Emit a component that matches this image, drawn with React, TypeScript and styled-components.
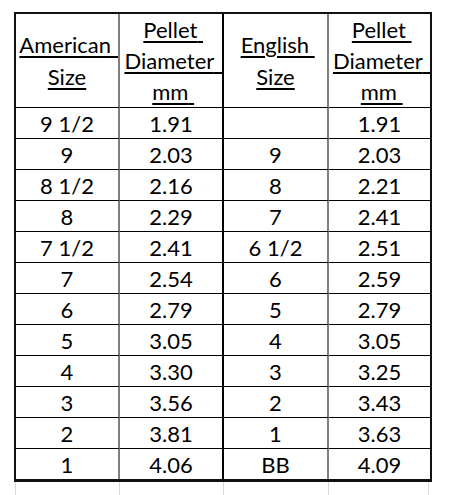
import React from "react";
import styled, { createGlobalStyle } from "styled-components";

const Global = createGlobalStyle`
  html, body { margin: 0; padding: 0; background: #fff; }
  body { font-family: Lato, "Open Sans", "Noto Sans", sans-serif; color: #000; }
`;

type Edge = "gray" | "black" | "none";

const edgeColor = (e: Edge) =>
  e === "gray" ? "2px solid #7f7f7f" : e === "black" ? "2px solid #000" : "none";

const Page = styled.div`
  padding: 12px 0 0 14px;
`;

const Table = styled.div`
  display: grid;
  grid-template-columns: 104px 104px 105px 101px;
  width: max-content;
  border: 2px solid #111;
  border-bottom-width: 3px;
`;

const HeadCell = styled.div<{ $edge: Edge }>`
  box-sizing: border-box;
  height: 94px;
  border-bottom: 1px solid #000;
  border-right: ${(p) => edgeColor(p.$edge)};
  display: flex;
  flex-direction: column;
  justify-content: center;
  align-items: stretch;
  overflow: hidden;
  font-size: 22px;
`;

const HeadLine = styled.div`
  height: 32px;
  line-height: 31px;
  text-align: center;
  white-space: nowrap;
  overflow: hidden;
`;

const Under = styled.span<{ $trail: number }>`
  text-decoration: underline;
  text-decoration-thickness: 2px;
  text-underline-offset: 3px;
  margin-right: ${(p) => -p.$trail * 0.2}em;
`;

const U = ({ children, trail = 0 }: { children: React.ReactNode; trail?: number }) => (
  <Under $trail={trail}>
    {children}
    {"\u00a0".repeat(trail)}
  </Under>
);

const Cell = styled.div<{ $edge: Edge; $last: boolean }>`
  box-sizing: border-box;
  height: ${(p) => (p.$last ? 30 : 31)}px;
  border-bottom: ${(p) => (p.$last ? "none" : "1px solid #000")};
  border-right: ${(p) => edgeColor(p.$edge)};
  display: flex;
  align-items: center;
  justify-content: center;
  font-size: 22px;
  padding-top: 1px;
  white-space: nowrap;
`;

const StubRow = styled.div`
  display: grid;
  grid-template-columns: 104px 104px 105px 101px;
  margin-left: 1px;
  height: 13px;
`;

const Stub = styled.div<{ $right?: boolean }>`
  border-left: 1px solid #dadada;
  ${(p) => (p.$right ? "border-right: 1px solid #dadada;" : "")}
`;

const rows: [string, string, string, string][] = [
  ["9 1/2", "1.91", "", "1.91"],
  ["9", "2.03", "9", "2.03"],
  ["8 1/2", "2.16", "8", "2.21"],
  ["8", "2.29", "7", "2.41"],
  ["7 1/2", "2.41", "6 1/2", "2.51"],
  ["7", "2.54", "6", "2.59"],
  ["6", "2.79", "5", "2.79"],
  ["5", "3.05", "4", "3.05"],
  ["4", "3.30", "3", "3.25"],
  ["3", "3.56", "2", "3.43"],
  ["2", "3.81", "1", "3.63"],
  ["1", "4.06", "BB", "4.09"],
];

const edges: Edge[] = ["gray", "black", "gray", "none"];

const Diameter = () => (
  <>
    <HeadLine>
      <U trail={1}>Pellet</U>
    </HeadLine>
    <HeadLine>
      <U trail={3}>Diameter</U>
    </HeadLine>
    <HeadLine>
      <U trail={1}>mm</U>
    </HeadLine>
  </>
);

export default function App() {
  return (
    <Page>
      <Global />
      <Table>
        <HeadCell $edge="gray">
          <HeadLine>
            <U trail={3}>American</U>
          </HeadLine>
          <HeadLine>
            <U>Size</U>
          </HeadLine>
        </HeadCell>
        <HeadCell $edge="black">
          <Diameter />
        </HeadCell>
        <HeadCell $edge="gray">
          <HeadLine>
            <U trail={1}>English</U>
          </HeadLine>
          <HeadLine>
            <U>Size</U>
          </HeadLine>
        </HeadCell>
        <HeadCell $edge="none">
          <Diameter />
        </HeadCell>
        {rows.map((r, i) =>
          r.map((v, j) => (
            <Cell key={`${i}-${j}`} $edge={edges[j]} $last={i === rows.length - 1}>
              {v}
            </Cell>
          ))
        )}
      </Table>
      <StubRow>
        <Stub />
        <Stub />
        <Stub />
        <Stub $right />
      </StubRow>
    </Page>
  );
}
